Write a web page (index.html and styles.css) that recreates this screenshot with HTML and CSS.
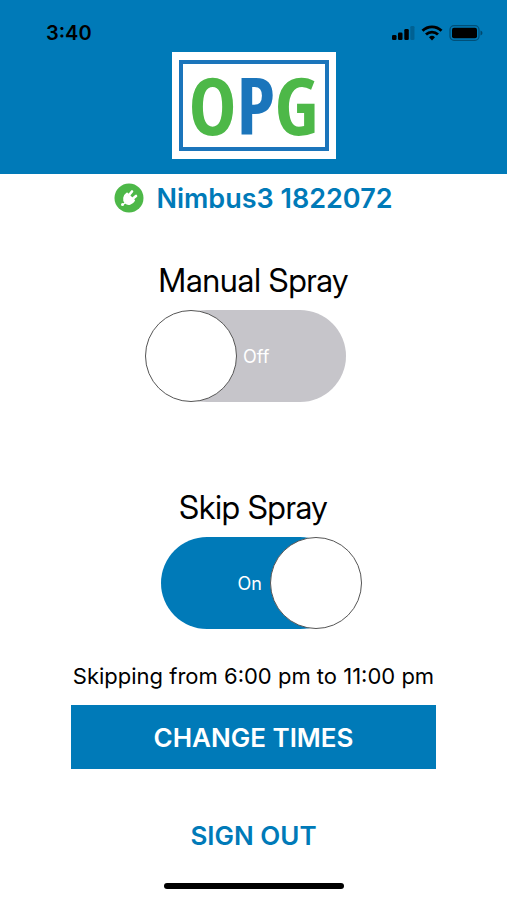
FILE: index.html
```html
<!DOCTYPE html>
<html lang="en">
<head>
<meta charset="utf-8">
<meta name="viewport" content="width=device-width, initial-scale=1">
<title>OPG</title>
<link rel="stylesheet" href="styles.css">
</head>
<body>
<header class="header">
  <div class="status">
    <span class="time">3:40</span>
    <div class="indicators">
      <svg width="24" height="16" viewBox="0 0 24 16" aria-hidden="true">
        <rect x="1" y="10" width="4.500" height="5" rx="1.300"/>
        <rect x="7" y="7.500" width="4.500" height="7.500" rx="1.300"/>
        <rect x="13.300" y="4" width="4.500" height="11" rx="1.300"/>
        <rect x="19.300" y="1" width="4.200" height="14" rx="1.300" opacity=".2"/>
      </svg>
      <svg width="22" height="16" viewBox="0 0 22 16" aria-hidden="true" fill="none" stroke="#000" stroke-width="2.8">
        <path d="M1.5 5.7a13.5 13.5 0 0 1 19 0"/>
        <path d="M5 9.6a8.5 8.5 0 0 1 12 0"/>
        <path d="M8 12.2a4.300 4.300 0 0 1 6 0l-3 3.300z" fill="#000" stroke="none"/>
      </svg>
      <svg width="34" height="16" viewBox="0 0 34 16" aria-hidden="true">
        <rect x="1" y=".7" width="29" height="14.600" rx="4" fill="none" stroke="#000" stroke-opacity=".35" stroke-width="1.300"/>
        <rect x="3" y="2.700" width="25" height="10.600" rx="2"/>
        <path d="M31.500 5.500q2 .8 2 2.500t-2 2.500z" opacity=".4"/>
      </svg>
    </div>
  </div>
  <div class="logo"><div class="logo-frame"><span>O</span><span class="logo-p">P</span><span>G</span></div></div>
</header>
<main class="main">
  <div class="device">
    <svg width="30" height="30" viewBox="0 0 30 30" aria-hidden="true">
      <circle cx="15" cy="15" r="14.500" fill="#4db848"/>
      <g fill="#fff" stroke="#fff" stroke-linecap="round">
        <path d="M13 10.500l7 7c-2 3.500-6 4.500-8.500 2s-1.500-7 1.500-9z" stroke-width="2" stroke-linejoin="round"/>
        <path d="M15.500 11.500l2.500-3M19 15.500l3-2.500" stroke-width="2.600"/>
        <path d="M11.500 19.500l-2.500 2" stroke-width="1.500"/>
        <circle cx="8.500" cy="21.500" r="1.500" stroke="none"/>
      </g>
    </svg>
    <h1>Nimbus3 1822072</h1>
  </div>
  <section class="control">
    <h2 id="manual">Manual Spray</h2>
    <label class="switch"><input type="checkbox" role="switch" aria-labelledby="manual"><span class="off">Off</span><span class="on">On</span></label>
  </section>
  <section class="control">
    <h2 id="skip">Skip Spray</h2>
    <label class="switch"><input type="checkbox" role="switch" aria-labelledby="skip" checked><span class="off">Off</span><span class="on">On</span></label>
  </section>
  <section class="schedule">
    <p>Skipping from 6:00 pm to 11:00 pm</p>
    <button class="change" type="button">CHANGE TIMES</button>
  </section>
  <button class="signout" type="button">SIGN OUT</button>
  <div class="home-bar"></div>
</main>
</body>
</html>
```

FILE: styles.css
```css
*, *::before { box-sizing: border-box; }
body {
  margin: 0;
  min-height: 100vh;
  background: #fff;
  color: #000;
  font-family: Inter, "Liberation Sans", sans-serif;
}
h1, h2, p { margin: 0; font-weight: 400; }
button { border: 0; padding: 0; font: inherit; cursor: pointer; }
.header {
  background: #007ab8;
  display: flex;
  flex-direction: column;
  align-items: center;
  padding-bottom: 15px;
}
.status {
  align-self: stretch;
  height: 52px;
  padding: 14px 24px 0 46px;
  display: flex;
  justify-content: space-between;
  align-items: center;
}
.time { font-size: 20px; font-weight: 600; }
.indicators { display: flex; gap: 6px; }
.logo { background: #fff; padding: 8px 7px; width: 164px; height: 107px; display: flex; }
.logo-frame {
  flex: 1;
  border: 4px solid #1b75bb;
  display: flex;
  justify-content: center;
  align-items: center;
  padding-bottom: 4px;
  color: #4db848;
  font: bold 80px/76px "Open Sans Condensed", "Roboto Condensed", "Noto Sans Condensed", "Liberation Sans Narrow", "Open Sans", sans-serif;
}
.logo-p { color: #1b75bb; }
.main { display: flex; flex-direction: column; align-items: center; }
.device {
  display: flex;
  align-items: center;
  gap: 12px;
  height: 48px;
}
.device h1 { font-size: 27px; font-weight: 600; color: #007ab8; }
.control {
  display: flex;
  flex-direction: column;
  align-items: center;
  gap: 9px;
  padding-top: 39px;
  margin-bottom: 47px;
}
.control h2 { font-family: "Inter Display", Inter, "Liberation Sans", sans-serif; font-size: 32px; line-height: 40px; }
.switch {
  position: relative;
  display: grid;
  align-items: center;
  width: 185px;
  height: 92px;
  color: #fff;
  font-size: 18px;
  cursor: pointer;
}
.switch > * { grid-area: 1 / 1; }
.switch input {
  appearance: none;
  margin: 0;
  width: 100%;
  height: 100%;
  border-radius: 46px;
  background: #c6c5ca;
}
.switch input::before {
  content: "";
  position: absolute;
  top: 0;
  left: -16px;
  width: 92px;
  height: 92px;
  border: 1px solid #555;
  border-radius: 50%;
  background: #fff;
}
.switch input:checked { background: #007ab8; }
.switch input:checked::before { left: auto; right: -16px; }
.switch .off { padding-left: 82px; }
.switch .on { padding-right: 84px; text-align: right; visibility: hidden; }
.switch input:checked ~ .on { visibility: visible; }
.switch input:checked ~ .off { visibility: hidden; }
.schedule {
  display: flex;
  flex-direction: column;
  align-items: center;
  gap: 14px;
  width: 72%;
  margin-top: -15px;
}
.schedule p { font-size: 22px; line-height: 30px; }
.change {
  width: 100%;
  height: 64px;
  background: #007ab8;
  color: #fff;
  font-size: 26px;
  font-weight: 600;
}
.signout {
  margin-top: 47px;
  background: none;
  color: #007ab8;
  font-size: 26px;
  font-weight: 600;
  line-height: 40px;
}
.home-bar { margin-top: 27px; width: 180px; height: 6px; border-radius: 3px; background: #000; }
```
